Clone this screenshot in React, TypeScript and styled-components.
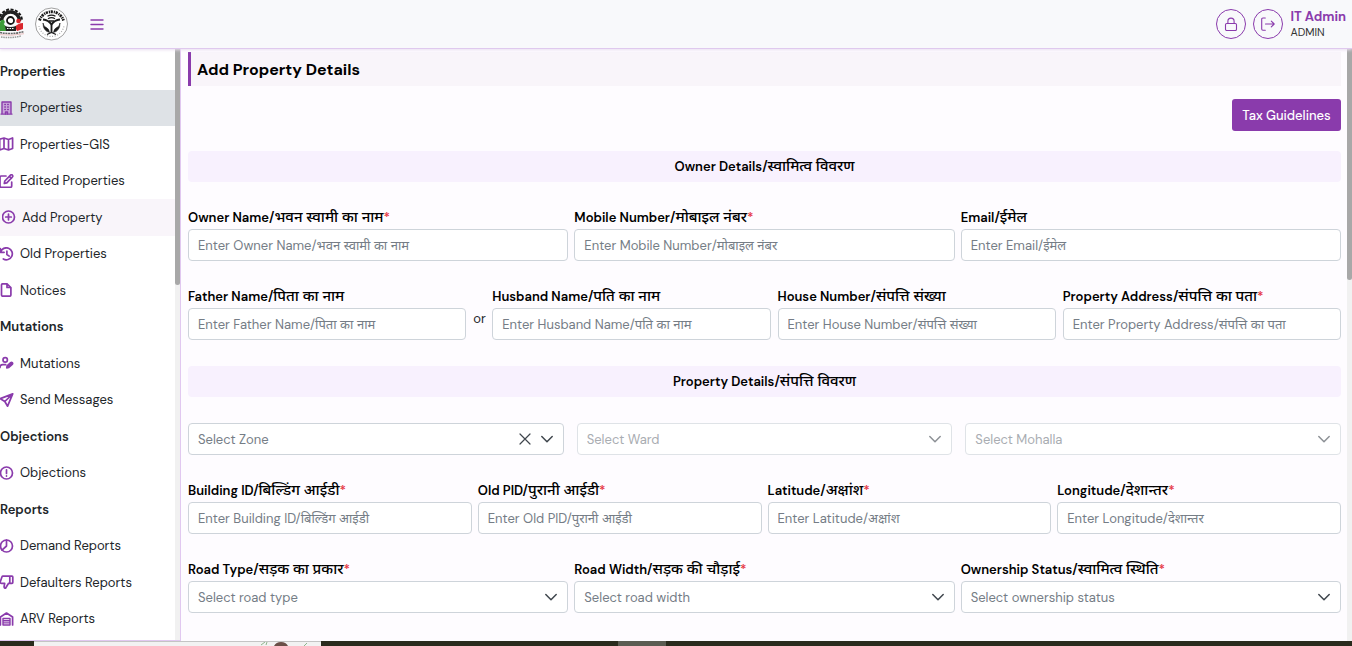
import React, { useId } from "react";
import styled, { createGlobalStyle, css } from "styled-components";

const purple = "#8a3bac";
const sans = '"DM Sans", Inter, "Noto Sans", "Noto Sans Devanagari", sans-serif';

const GlobalStyle = createGlobalStyle`
  * { box-sizing: border-box; }
  body { margin: 0; background: #fefcff; font-family: ${sans}; font-size: 13px; color: #212529; }
  button, input, select { font: inherit; }
`;

const Page = styled.div`
  display: flex;
  flex-direction: column;
  height: 100vh;
  overflow: hidden;
`;

const Header = styled.header`
  display: flex;
  align-items: center;
  flex: none;
  height: 49px;
  padding-right: 6px;
  background: #f8f9fb;
  border-bottom: 1px solid #dfc9ee;
  box-shadow: 0 1px 3px #e9dff0;
  position: relative;
`;

const Logos = styled.div`
  display: flex;
  align-items: center;
  gap: 10px;
  svg { display: block; }
`;

const MenuButton = styled.button`
  display: flex;
  margin-left: 22px;
  padding: 0;
  border: 0;
  background: none;
  color: ${purple};
`;

const UserArea = styled.div`
  display: flex;
  align-items: center;
  gap: 7px;
  margin-left: auto;
`;

const RoundButton = styled.button`
  display: flex;
  align-items: center;
  justify-content: center;
  width: 30px;
  height: 30px;
  padding: 0;
  border: 1px solid ${purple};
  border-radius: 50%;
  background: transparent;
  color: ${purple};
`;

const UserName = styled.div`
  color: ${purple};
  font-weight: 700;
  line-height: 16px;
`;

const UserRole = styled.div`
  font-size: 11px;
  line-height: 15px;
  color: #333;
`;

const Body = styled.div`
  display: flex;
  flex: 1;
  min-height: 0;
`;

const Sidebar = styled.aside`
  display: flex;
  flex: none;
  width: 181px;
  background: #fff;
  border-right: 1px solid #e1c8f0;
  border-bottom: 1px solid #e1c8f0;
`;

const Nav = styled.nav`
  display: grid;
  grid-auto-rows: 1fr;
  flex: 1;
  padding: 4px 0 3px;
`;

const NavHeading = styled.h2`
  display: flex;
  align-items: center;
  margin: 0;
  font-size: 13px;
  font-weight: 600;
`;

const NavLink = styled.a<{ $state?: "selected" | "hover" }>`
  display: flex;
  align-items: center;
  gap: 6px;
  color: #212529;
  text-decoration: none;
  svg { flex: none; color: ${purple}; }
  ${(p) => p.$state === "selected" && css`background: #dee2e6;`}
  ${(p) => p.$state === "hover" && css`background: #f9f5fa; padding-left: 2px;`}
`;

const ScrollTrack = styled.div`
  flex: none;
  width: 5px;
  background: #f1f1f1;
`;

const ScrollThumb = styled.div<{ $share: number }>`
  height: ${(p) => p.$share}%;
  background: #a8a8a8;
  border-radius: 0 0 3px 3px;
`;

const Main = styled.main`
  flex: 1;
  min-width: 0;
  overflow: hidden;
  padding: 3px 6px 0 7px;
`;

const Title = styled.h1`
  height: 34px;
  margin: 0 0 13px;
  padding-left: 6px;
  border-left: 3px solid ${purple};
  background: #f9f5fa;
  color: #000;
  font-size: 16px;
  font-weight: 700;
  line-height: 35px;
`;

const Actions = styled.div`
  display: flex;
  justify-content: flex-end;
  margin-bottom: 20px;
`;

const PrimaryButton = styled.button`
  height: 32px;
  min-width: 109px;
  padding: 0 10px;
  border: 0;
  border-radius: 3px;
  background: ${purple};
  color: #fff;
  font-weight: 500;
`;

const SectionTitle = styled.h2`
  margin: 0 0 26px;
  border-radius: 4px;
  background: #f8f1fe;
  color: #000;
  font-size: 13px;
  font-weight: 600;
  line-height: 31px;
  height: 31px;
  text-align: center;
`;

const Hindi = styled.span`
  font-size: 15px;
  font-weight: 500;
  line-height: 0;
`;

const Row = styled.div<{ $gap?: number }>`
  display: flex;
  gap: ${(p) => p.$gap ?? 6}px;
  margin-bottom: 26px;
`;

const FieldBox = styled.div`
  flex: 1 1 0;
  min-width: 0;
`;

const Label = styled.label`
  display: block;
  height: 21px;
  color: #000;
  font-weight: 600;
  line-height: 20px;
  white-space: nowrap;
`;

const Required = styled.span`
  color: #e63946;
`;

const controlStyle = css`
  display: block;
  width: 100%;
  height: 32px;
  padding: 0 9px;
  border: 1px solid #ced4da;
  border-radius: 4px;
  background: #fff;
  color: #757d86;
  outline: none;
`;

const Input = styled.input`
  ${controlStyle}
  &::placeholder { color: #757d86; opacity: 1; }
`;

const Select = styled.select`
  ${controlStyle}
  appearance: none;
  &:disabled { opacity: 1; color: #a9adb2; border-color: #dfe3e7; }
`;

const SelectBox = styled.div`
  position: relative;
`;

const SelectIcons = styled.div<{ $muted?: boolean }>`
  position: absolute;
  top: 0;
  right: 10px;
  height: 32px;
  display: flex;
  align-items: center;
  gap: 8px;
  color: ${(p) => (p.$muted ? "#8d9196" : "#3f464d")};
  pointer-events: none;
  svg { display: block; }
`;

const ClearButton = styled.button`
  padding: 0;
  border: 0;
  background: none;
  color: inherit;
  pointer-events: auto;
`;

const Or = styled.span`
  align-self: flex-end;
  width: 12px;
  line-height: 20px;
  padding-bottom: 11px;
`;

const Taskbar = styled.footer`
  display: flex;
  flex: none;
  height: 5px;
  background: #2a2b1d;
`;

const TaskPreview = styled.div`
  width: 287px;
  margin: 0 297px 0 34px;
  background: #f2f2f2;
  border-top: 1px solid #c4c4c4;
  svg { display: block; margin-left: 224px; }
`;

const TaskActive = styled.div`
  width: 48px;
  background: #5b5c52;
`;

const Icon = ({ width = 1.7, children }: { width?: number; children: React.ReactNode }) => (
  <svg width="14" height="14" viewBox="0 0 14 14" fill="none" stroke="currentColor" strokeWidth={width} strokeLinecap="round" strokeLinejoin="round" aria-hidden="true">
    {children}
  </svg>
);

const icons = {
  building: <><path d="M2 12.800V.8h9v12z" fill="#c9a6da" stroke="none" /><path d="M2 13V1h9v12M1 13.100h11" strokeWidth="1.400" /><path d="M4.800 3.500h.6M7.700 3.500h.6M4.800 6h.6M7.700 6h.6M4.800 8.500h.6M7.700 8.500h.6M5.500 13v-2h2v2" strokeWidth="1.400" /></>,
  map: <path d="M-.3 2.300 4 1l4.500 1.500L12.600 1v10.500L8.500 13 4 11.500-.3 13zM4 1v10.500M8.500 2.500V13" />,
  edit: <><path d="M6 2H1.200Q0 2 0 3.200v8.900q0 1.200 1.200 1.200h9.300q1.200 0 1.200-1.200V8" /><path d="M4.300 9.500 4.800 7l5.700-5.900q1-.8 1.900.1.800.9 0 1.800L6.800 8.900zM9.400 2.400l2 2" /></>,
  plus: <><circle cx="6.500" cy="7" r="6" /><path d="M6.500 4.200v5.600M3.700 7h5.600" /></>,
  history: <><path d="M.3 1.500v3.800h3.800M.6 5A6 6 0 1 1 3.300 12" /><path d="M6.900 4.200v3.300l2.300 1.600" /></>,
  file: <path d="M7 .8H2.700q-1.200 0-1.200 1.200v10q0 1.200 1.200 1.200h7q1.200 0 1.200-1.200V4.500zM7 .8v3.700h3.900" />,
  userEdit: <><circle cx="5.200" cy="3.900" r="2.200" /><path d="M0 11.500v-.4q0-2.400 2.700-2.400h3" /><path d="m6.800 11.800.3-1.900 3.600-3.200q.8-.7 1.500 0 .8.800 0 1.600l-3.400 3.100z" fill="currentColor" /></>,
  send: <path d="M12.700.9.3 5.600l4.500 2.900 2.800 4.700zM12.700.9 4.800 8.500" />,
  alert: <><circle cx="6.500" cy="7" r="6" /><path d="M6.500 3.800v3.600M6.500 9.900v.2" /></>,
  pie: <><circle cx="6.500" cy="7" r="6" /><path d="M6.500 1v6L2 11.100" /></>,
  thumbsDown: <path d="M9.800 1.200H3q-.8 0-1.100.8L.3 6.700Q-.1 8.300 1.500 8.300h3.200l-.6 3.200q-.2 1.600 1.400 1.800l3.100-5h1.200M9.800 1.200H12q.8 0 .8.800v5.500q0 .8-.8.800H9.800z" />,
  warehouse: <><path d="M.4 13V5l6.100-4 6.100 4v8" /><path d="M3 13V6.500h7V13zM3 8.700h7M3 10.900h7" strokeWidth="1.400" /></>,
};

type IconName = keyof typeof icons;
type NavEntry = { heading: string } | { icon: IconName; text: string; state?: "selected" | "hover" };

const navEntries: NavEntry[] = [
  { heading: "Properties" },
  { icon: "building", text: "Properties", state: "selected" },
  { icon: "map", text: "Properties-GIS" },
  { icon: "edit", text: "Edited Properties" },
  { icon: "plus", text: "Add Property", state: "hover" },
  { icon: "history", text: "Old Properties" },
  { icon: "file", text: "Notices" },
  { heading: "Mutations" },
  { icon: "userEdit", text: "Mutations" },
  { icon: "send", text: "Send Messages" },
  { heading: "Objections" },
  { icon: "alert", text: "Objections" },
  { heading: "Reports" },
  { icon: "pie", text: "Demand Reports" },
  { icon: "thumbsDown", text: "Defaulters Reports" },
  { icon: "warehouse", text: "ARV Reports" },
];

const Chevron = () => <Icon width={1.5}><path d="M1.800 4.500 7 9.700l5.200-5.200" /></Icon>;

const Bilingual = ({ text }: { text: string }) => {
  const [english, hindi] = text.split("/");
  return <>{english}/<Hindi lang="hi">{hindi}</Hindi></>;
};

const Caption = ({ id, text, required }: { id: string; text: string; required?: boolean }) => (
  <Label htmlFor={id}><Bilingual text={text} />{required && <Required>*</Required>}</Label>
);

const TextField = ({ label, required }: { label: string; required?: boolean }) => {
  const id = useId();
  return (
    <FieldBox>
      <Caption id={id} text={label} required={required} />
      <Input id={id} placeholder={`Enter ${label}`} />
    </FieldBox>
  );
};

const SelectField = ({ label, prompt, disabled, clearable }: { label?: string; prompt: string; disabled?: boolean; clearable?: boolean }) => {
  const id = useId();
  return (
    <FieldBox>
      {label && <Caption id={id} text={label} required />}
      <SelectBox>
        <Select id={id} disabled={disabled} aria-label={label ? undefined : prompt}>
          <option>{prompt}</option>
        </Select>
        <SelectIcons $muted={disabled}>
          {clearable && <ClearButton type="button" aria-label="Clear"><Icon width={1.2}><path d="m2 2 10 10M12 2 2 12" /></Icon></ClearButton>}
          <Chevron />
        </SelectIcons>
      </SelectBox>
    </FieldBox>
  );
};

const CityLogo = () => (
  <svg width="25" height="34" viewBox="0 0 25 34" aria-label="Municipal corporation">
    <path d="M-1 14a11.500 11.500 0 0 1 23 0" fill="#fff" stroke="#181818" strokeWidth="2" strokeDasharray="3 1.500" />
    <path d="M1.500 14a9 9 0 0 1 18 0" fill="none" stroke="#222" strokeWidth="3.500" />
    <circle cx="10.500" cy="13.500" r="3.500" fill="#fff" stroke="#151515" strokeWidth="1.800" />
    <path d="M0 15q4 1 6 5v4H0z" fill="#3c9b38" />
    <circle cx="2.500" cy="15" r="2.300" fill="#3c9b38" />
    <path d="M15 20q3-4 8-4v6l-6 2z" fill="#d9262c" />
    <circle cx="18.500" cy="14" r="2.300" fill="#d9262c" />
    <path d="M5 19q5.500 2 11 0v5H6z" fill="#222" />
    <path d="M7 21.500h7" stroke="#fff" strokeDasharray="1.500 1" />
    <path d="M0 25.500q12 2.500 24-1" fill="none" stroke="#666" strokeWidth="1.600" strokeDasharray="2 .7" />
    <path d="M0 27.700q12 1.500 24-1" fill="none" stroke="#e09a9a" strokeWidth=".6" />
    <path d="M1 30q10 1.500 20-1" fill="none" stroke="#999" strokeWidth="1.500" strokeDasharray="1.500 .8" />
  </svg>
);

const StateLogo = () => (
  <svg width="33" height="34" viewBox="0 0 33 34" fill="none" stroke="#1b1b1b" aria-label="State emblem">
    <circle cx="16.500" cy="17" r="16" fill="#fff" stroke="#888" strokeWidth=".8" />
    <path d="M4.500 13.500a12.600 12.600 0 0 1 24 0" strokeWidth="2.800" strokeDasharray="2.200 .9 1.200 .7" />
    <path d="M4 19a12.700 12.700 0 0 0 25 0" stroke="#aaa" strokeWidth="1.200" strokeDasharray="1 1.600" />
    <path d="M8 12.500q5.500.5 8.500 5 3-4.500 8.500-5" strokeWidth="2" />
    <path d="M16.500 17.500V26" strokeWidth="1.800" />
    <path d="M12.500 9.300q4-2.500 8 0M13 11.700q3.500-2 7 0M14 14h5" strokeWidth="1.300" />
    <path d="M8 16q0 8 6.500 9.500-.3-4-4-5.500Q8.500 19 8 16zM25 16q0 8-6.500 9.500.3-4 4-5.500 2-1 2.500-4z" fill="#1b1b1b" strokeWidth=".6" />
    <path d="m12 27.500 4.500-2 4.500 2" strokeWidth="1.200" />
  </svg>
);

export default function App() {
  return (
    <Page>
      <GlobalStyle />
      <Header>
        <Logos><CityLogo /><StateLogo /></Logos>
        <MenuButton type="button" aria-label="Menu"><Icon><path d="M1 3h12M1 7.500h12M1 12h12" strokeWidth="1.400" /></Icon></MenuButton>
        <UserArea>
          <RoundButton type="button" aria-label="Change password">
            <Icon width={1.1}><rect x="1.500" y="6.500" width="11" height="7" rx="1.200" /><path d="M3.900 6.500V4.200a3.100 3.100 0 0 1 6.200 0v2.300" /></Icon>
          </RoundButton>
          <RoundButton type="button" aria-label="Log out">
            <Icon width={1.1}><path d="M4.300 1H1.900Q.7 1 .7 2.200v9.800q0 1.200 1.200 1.200h2.400M4.500 7h8.700M10.300 4.100 13.200 7l-2.900 2.900" /></Icon>
          </RoundButton>
          <div>
            <UserName>IT Admin</UserName>
            <UserRole>ADMIN</UserRole>
          </div>
        </UserArea>
      </Header>
      <Body>
        <Sidebar>
          <Nav>
            {navEntries.map((e, i) =>
              "heading" in e ? <NavHeading key={i}>{e.heading}</NavHeading> : (
                <NavLink key={i} href="#" $state={e.state}><Icon>{icons[e.icon]}</Icon>{e.text}</NavLink>
              )
            )}
          </Nav>
          <ScrollTrack><ScrollThumb $share={40} /></ScrollTrack>
        </Sidebar>
        <Main>
          <Title>Add Property Details</Title>
          <Actions><PrimaryButton type="button">Tax Guidelines</PrimaryButton></Actions>
          <SectionTitle><Bilingual text="Owner Details/स्वामित्व विवरण" /></SectionTitle>
          <Row>
            <TextField label="Owner Name/भवन स्वामी का नाम" required />
            <TextField label="Mobile Number/मोबाइल नंबर" required />
            <TextField label="Email/ईमेल" />
          </Row>
          <Row $gap={7}>
            <TextField label="Father Name/पिता का नाम" />
            <Or>or</Or>
            <TextField label="Husband Name/पति का नाम" />
            <TextField label="House Number/संपत्ति संख्या" />
            <TextField label="Property Address/संपत्ति का पता" required />
          </Row>
          <SectionTitle><Bilingual text="Property Details/संपत्ति विवरण" /></SectionTitle>
          <Row $gap={13}>
            <SelectField prompt="Select Zone" clearable />
            <SelectField prompt="Select Ward" disabled />
            <SelectField prompt="Select Mohalla" disabled />
          </Row>
          <Row>
            <TextField label="Building ID/बिल्डिंग आईडी" required />
            <TextField label="Old PID/पुरानी आईडी" required />
            <TextField label="Latitude/अक्षांश" required />
            <TextField label="Longitude/देशान्तर" required />
          </Row>
          <Row>
            <SelectField label="Road Type/सड़क का प्रकार" prompt="Select road type" />
            <SelectField label="Road Width/सड़क की चौड़ाई" prompt="Select road width" />
            <SelectField label="Ownership Status/स्वामित्व स्थिति" prompt="Select ownership status" />
          </Row>
        </Main>
        <ScrollTrack><ScrollThumb $share={39} /></ScrollTrack>
      </Body>
      <Taskbar>
        <TaskPreview>
          <svg width="50" height="4" viewBox="0 0 50 4" aria-hidden="true">
            <path d="M3 3 7 0M8 3l1-3M46 4l3-3" stroke="#8fb58c" />
            <path d="M16 4q2-4 7-4t7 4z" fill="#6b4f48" />
          </svg>
        </TaskPreview>
        <TaskActive />
      </Taskbar>
    </Page>
  );
}
